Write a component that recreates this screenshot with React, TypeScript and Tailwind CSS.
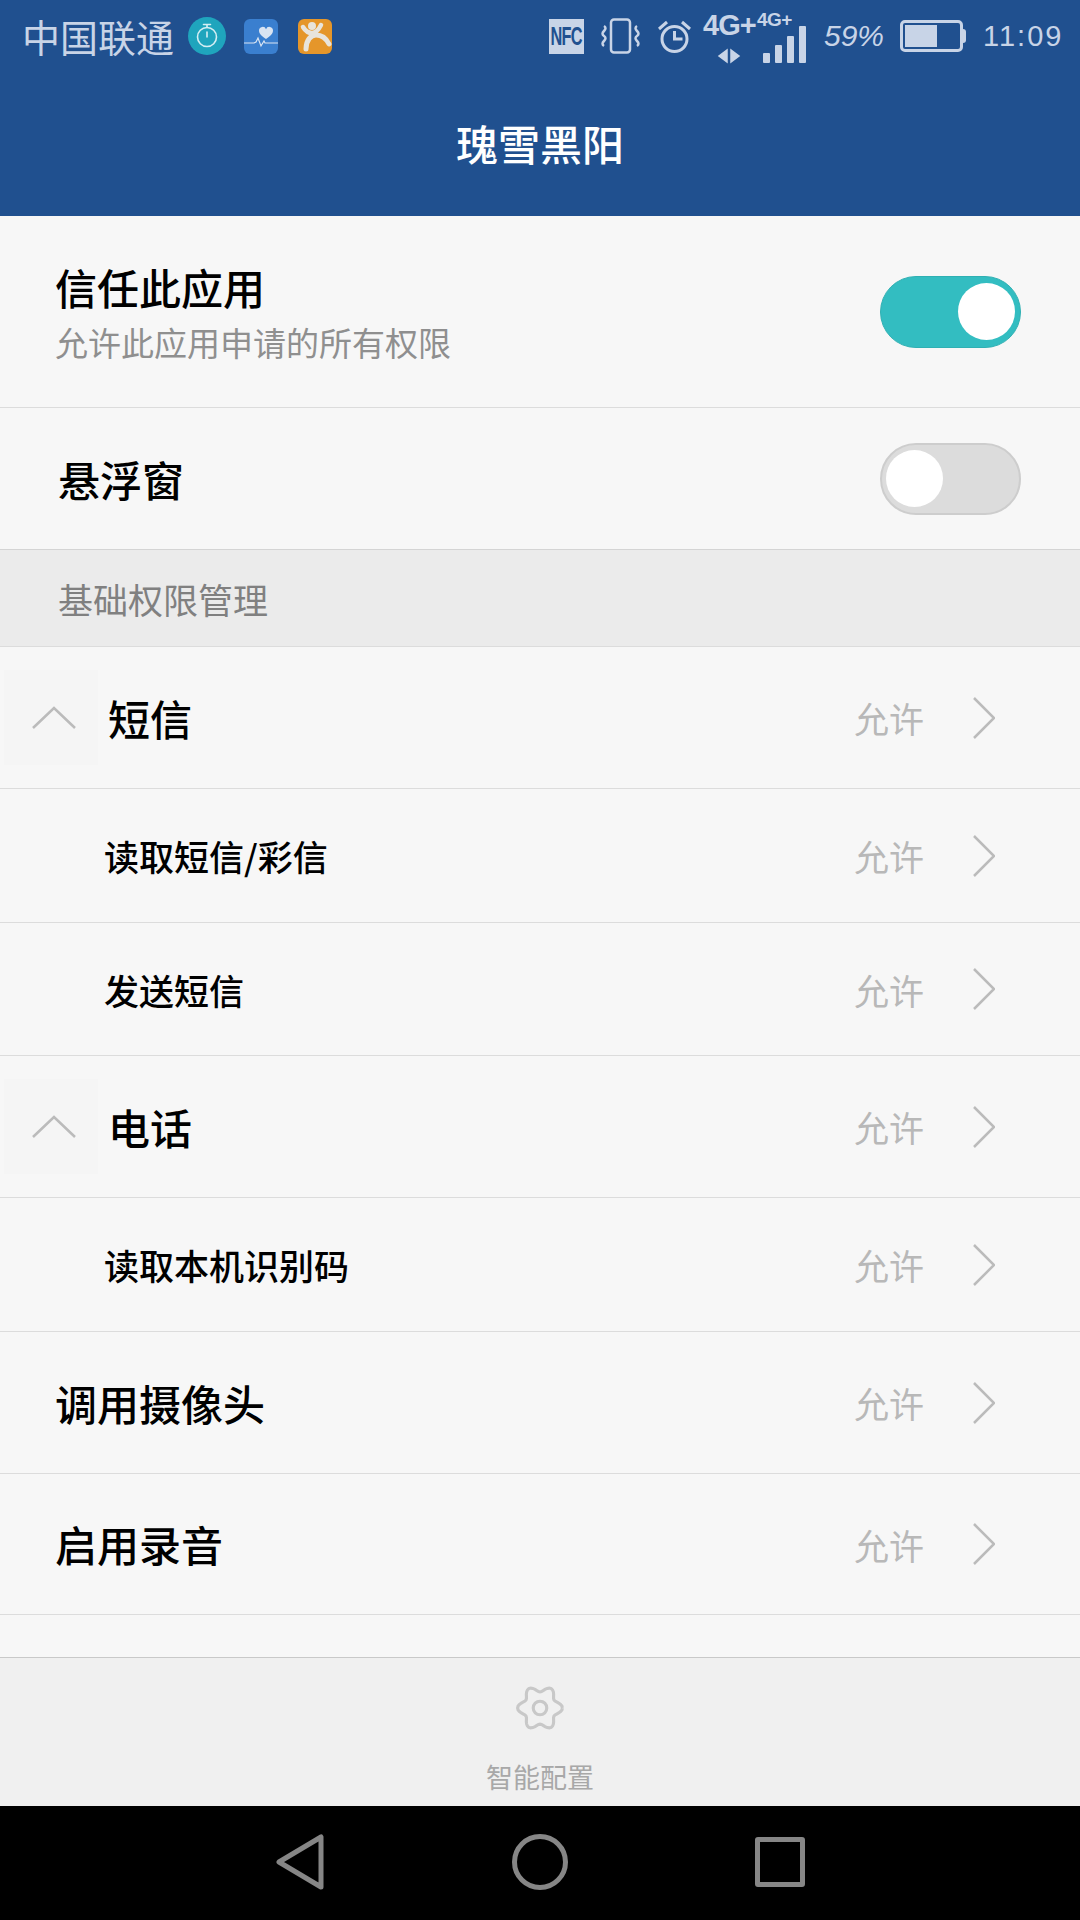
const CJK = "font-['Noto_Sans_CJK_SC','Noto_Sans',sans-serif]";

type Perm = { label: string; h: string; kind: "group" | "child" | "plain" };

const perms: Perm[] = [
  { label: "短信", h: "h-[142px]", kind: "group" },
  { label: "读取短信/彩信", h: "h-[134px]", kind: "child" },
  { label: "发送短信", h: "h-[133px]", kind: "child" },
  { label: "电话", h: "h-[142px]", kind: "group" },
  { label: "读取本机识别码", h: "h-[134px]", kind: "child" },
  { label: "调用摄像头", h: "h-[142px]", kind: "plain" },
  { label: "启用录音", h: "h-[141px]", kind: "plain" },
];

// six soft lobes, with dips at the top and the bottom like the original gear
const gearPath = Array.from({ length: 73 }, (_, i) => {
  const t = (i * 5 * Math.PI) / 180;
  const r = 18.5 + 3 * Math.cos(6 * t);
  return `${i ? "L" : "M"}${(24 + r * Math.cos(t)).toFixed(2)} ${(24 + r * Math.sin(t)).toFixed(2)}`;
}).join(" ");

function Toggle({ on }: { on: boolean }) {
  return (
    <div
      className={
        on
          ? "flex h-[72px] w-[141px] items-center justify-end rounded-full border border-[#2fb0b3] bg-[#33bdc1] pr-[5px]"
          : "flex h-[72px] w-[141px] items-center justify-start rounded-full border-2 border-[#cdcdcd] bg-[#dcdcdc] pl-[4px]"
      }
    >
      <div className="h-[57px] w-[57px] rounded-full bg-white" />
    </div>
  );
}

function StatusIcons() {
  return (
    <div className="flex h-[72px] items-center bg-[#20508f] text-[#c8d4e7]">
      <span className={`${CJK} ml-[22px] w-[166px] whitespace-nowrap text-[38px] leading-none`}>中国联通</span>
      <svg viewBox="0 0 38 38" className="h-[38px] w-[38px]">
        <circle cx="19" cy="19" r="19" fill="#1fa5bd" />
        <circle cx="19" cy="20" r="9.5" fill="none" stroke="#d5eef3" strokeWidth="1.6" />
        <path d="M15.5 7.5h7M19 8v2.5M19 15v5" stroke="#d5eef3" strokeWidth="1.6" strokeLinecap="round" />
      </svg>
      <svg viewBox="0 0 34 35" className="ml-[18px] h-[35px] w-[34px]">
        <rect width="34" height="35" rx="6" fill="#3a7fcf" />
        <path d="M22 20c-4-3-7-5-7-8.500a3.600 3.600 0 0 1 7-1.200a3.600 3.600 0 0 1 7 1.200C29 15 26 17 22 20z" fill="#d9e4f2" />
        <path d="M0 24h10l2-1 2-4 3 8 3-5 1 2h13" fill="none" stroke="#d9e4f2" strokeWidth="1.2" />
      </svg>
      <svg viewBox="0 0 34 35" className="ml-[20px] h-[35px] w-[34px]">
        <rect width="34" height="35" rx="6" fill="#e5962a" />
        <circle cx="14" cy="7" r="4" fill="#e8e4dc" />
        <path d="M5 8c3 5 6 6 9 6s6-2 9-8" fill="none" stroke="#e8e4dc" strokeWidth="4.500" strokeLinecap="round" />
        <path d="M8 30c0-9 5-14 10-14 5 0 10 3 13 9" fill="none" stroke="#e8e4dc" strokeWidth="5" strokeLinecap="round" />
      </svg>

      <div className="ml-auto flex items-center pr-[20px]">
        <div className="flex h-[35px] w-[35px] items-center justify-center overflow-hidden bg-[#c8d4e7] font-['Liberation_Sans',sans-serif] text-[24px] font-bold leading-none tracking-[-1px] text-[#20508f]">
          <span className="inline-block scale-x-[0.68] scale-y-[1.1]">NFC</span>
        </div>
        <svg viewBox="0 0 39 36" className="ml-[17px] h-[36px] w-[39px]" fill="none" stroke="currentColor">
          <rect x="10" y="1.500" width="19" height="33" rx="3" strokeWidth="2.500" />
          <path d="M3 8q3 2 0 5t0 5t0 5t0 5M36 8q-3 2 0 5t0 5t0 5t0 5" strokeWidth="2.500" />
        </svg>
        <svg viewBox="0 0 35 36" className="ml-[17px] h-[36px] w-[35px]" fill="none" stroke="currentColor">
          <circle cx="17.500" cy="21" r="12.500" strokeWidth="3" />
          <path d="M17.500 13v8h8" strokeWidth="3" />
          <path d="M2 11l8-7M33 11l-8-7" strokeWidth="3" />
        </svg>
        <div className="relative ml-[11px] h-[54px] w-[52px] font-['Liberation_Sans',sans-serif] font-bold leading-none">
          <span className="absolute left-0 top-[2px] whitespace-nowrap text-[29px] tracking-[-1px]">4G+</span>
          <svg viewBox="0 0 24 12" className="absolute left-[11px] top-[38px] h-[18px] w-[30px]" fill="currentColor">
            <path d="M11 0v12L3 6zM13 0v12l8-6z" />
          </svg>
        </div>
        <div className="relative ml-[2px] h-[54px] w-[51px] font-['Liberation_Sans',sans-serif] font-bold leading-none">
          <span className="absolute left-0 top-[1px] whitespace-nowrap text-[19px] tracking-[-0.5px]">4G+</span>
          <div className="absolute bottom-0 left-[6px] flex items-end gap-[5px]">
            <div className="h-[10px] w-[7px] rounded-[1px] bg-current" />
            <div className="h-[18px] w-[7px] rounded-[1px] bg-current" />
            <div className="h-[27px] w-[7px] rounded-[1px] bg-current" />
            <div className="h-[37px] w-[7px] rounded-[1px] bg-current" />
          </div>
        </div>
        <span className="ml-[16px] w-[60px] whitespace-nowrap font-['Liberation_Sans',sans-serif] text-[30px] italic leading-none">59%</span>
        <div className="ml-[16px] flex items-center">
          <div className="h-[32px] w-[63px] rounded-[5px] border-[3px] border-current p-[2px]">
            <div className="h-full w-[32px] bg-current" />
          </div>
          <div className="h-[14px] w-[3px] rounded-r-sm bg-current" />
        </div>
        <span className="ml-[17px] w-[77px] whitespace-nowrap font-['Liberation_Sans',sans-serif] text-[29px] leading-none tracking-[2px]">11:09</span>
      </div>
    </div>
  );
}

function PermRow({ label, h, kind }: Perm) {
  return (
    <div className={`${h} flex items-center border-b border-[#dcdcdc]`}>
      {kind === "group" && (
        <div className="ml-[4px] flex h-[95px] w-[94px] items-center justify-center bg-[#f5f5f5] pl-[6px]">
          <svg viewBox="0 0 44 24" className="h-[24px] w-[44px]" fill="none" stroke="#bbbbbb" strokeWidth="2.500">
            <path d="M1 22 22 2l21 20" />
          </svg>
        </div>
      )}
      <span
        className={
          kind === "group"
            ? `${CJK} ml-[10px] text-[42px] font-medium leading-none text-black`
            : kind === "child"
              ? `${CJK} ml-[104px] text-[35px] font-medium leading-none text-black`
              : `${CJK} ml-[55px] text-[42px] font-medium leading-none text-black`
        }
      >
        {label}
      </span>
      <span className={`${CJK} ml-auto text-[35px] leading-none text-[#b8b8b8]`}>允许</span>
      <svg viewBox="0 0 22 42" className="ml-[49px] mr-[85px] h-[42px] w-[22px]" fill="none" stroke="#bbbbbb" strokeWidth="2.500">
        <path d="M1 1l20 20L1 41" />
      </svg>
    </div>
  );
}

export default function App() {
  return (
    <div className="flex h-[1920px] w-[1080px] flex-col overflow-hidden bg-[#f7f7f7]">
      <header className="h-[216px] shrink-0 bg-[#20508f]">
        <StatusIcons />
        <h1 className={`${CJK} pt-[50px] text-center text-[42px] font-medium leading-none text-white`}>瑰雪黑阳</h1>
      </header>

      <div className="flex h-[192px] shrink-0 items-center justify-between border-b border-[#dcdcdc] pl-[55px] pr-[59px]">
        <div className="flex flex-col gap-[18px] pt-[1px]">
          <span className={`${CJK} text-[42px] font-medium leading-none text-black`}>信任此应用</span>
          <span className={`${CJK} text-[33px] leading-none text-[#8f8f8f]`}>允许此应用申请的所有权限</span>
        </div>
        <Toggle on />
      </div>
      <div className="flex h-[142px] shrink-0 items-center justify-between border-b border-[#d4d4d4] pl-[58px] pr-[59px]">
        <span className={`${CJK} text-[42px] font-medium leading-none text-black`}>悬浮窗</span>
        <Toggle on={false} />
      </div>
      <div className="flex h-[97px] shrink-0 items-center border-b border-[#dcdcdc] bg-[#ebebeb] pl-[58px]">
        <span className={`${CJK} text-[35px] leading-none text-[#808080]`}>基础权限管理</span>
      </div>

      <div className="flex min-h-0 flex-1 flex-col">
        {perms.map((p) => (
          <PermRow key={p.label} {...p} />
        ))}
      </div>

      <footer className="flex h-[149px] shrink-0 flex-col items-center border-t border-[#c9c9c9] bg-[#f0f0f0] pt-[25px]">
        <svg viewBox="0 0 48 48" className="h-[50px] w-[50px]" fill="none" stroke="#c8c8c8" strokeWidth="3">
          <path d={gearPath} />
          <circle cx="24" cy="24" r="6.500" />
        </svg>
        <span className={`${CJK} mt-[30px] text-[27px] leading-none text-[#a8a8a8]`}>智能配置</span>
      </footer>

      <nav className="flex h-[114px] shrink-0 items-center bg-black pb-[2px] pl-[276px]">
        <svg viewBox="0 0 48 56" className="h-[56px] w-[48px]" fill="none" stroke="#868686" strokeWidth="5" strokeLinejoin="round">
          <path d="M45 3v50L3 28z" />
        </svg>
        <div className="ml-[188px] h-[56px] w-[56px] rounded-full border-[5px] border-[#868686]" />
        <div className="ml-[187px] h-[50px] w-[50px] rounded-[3px] border-[5px] border-[#868686]" />
      </nav>
    </div>
  );
}
